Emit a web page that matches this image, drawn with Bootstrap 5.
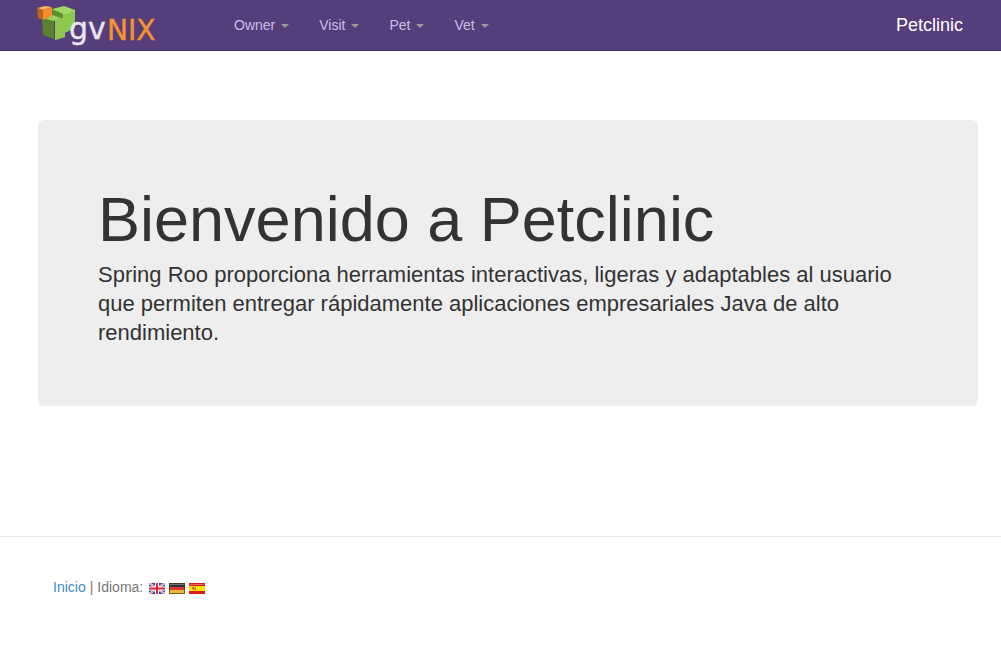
<!DOCTYPE html>
<html lang="es">
<head>
<meta charset="utf-8">
<meta name="viewport" content="width=device-width, initial-scale=1">
<title>Petclinic</title>
<link href="https://cdn.jsdelivr.net/npm/bootstrap@5.3.0/dist/css/bootstrap.min.css" rel="stylesheet">
<style>
  body { font-family: "Liberation Sans", Arial, sans-serif; font-size: 14px; line-height: 20px; color: #333; }
  .topbar { background: #563d7c; border-bottom: 1px solid #463265; padding: 0 23px 0 22px; }
  .topbar .navbar-brand { padding: 0; margin: 0; line-height: 20px; font-size: 18px; }
  .topbar .navbar-brand.site-name { padding: 15px; }
  .topbar .navbar-brand.logo { margin: 0 60px 0 15px; }
  .topbar .navbar-nav .nav-link { color: #cdbfe3; padding: 15px; line-height: 20px; display: flex; align-items: center; }
  .topbar .navbar-nav .nav-link:hover { color: #fff; }
  .topbar .dropdown-toggle::after { border-top: 4px solid #999; border-right: 4px solid transparent; border-left: 4px solid transparent; margin: 2px 0 0 6px; }
  .page-body { padding: 69px 23px 130px 38px; }
  .hero { background: #eee; border-radius: 6px; padding: 68px 60px 59px; }
  .hero h1 { font-size: 63px; line-height: 63px; font-weight: 400; margin-bottom: 9px; }
  .hero p { font-size: 22px; line-height: 29px; margin: 0; }
  .page-footer { border-top: 1px solid #e5e5e5; padding: 40px 53px; color: #777; }
  .page-footer a { color: #428bca; text-decoration: none; }
  .languages { padding-left: 2px; }
  .flag { display: block; margin-top: 2px; }
</style>
</head>
<body>
<nav class="navbar navbar-expand topbar align-items-start">
  <a class="navbar-brand logo" href="#" aria-label="gvNIX">
    <svg class="d-block" width="122" height="48" viewBox="0 0 122 48">
      <path d="M5 19 11 18 17 20V39L6 35Z" fill="#59812f"/>
      <path d="M11 13 16 15V21L6 18 11 17Z" fill="#699a37"/>
      <path d="M15 9 27 6 38 10V14L28 18 16 14Z" fill="#a1d765"/>
      <path d="M17 14 27 17 38 12V34L18 40V20L15 19Z" fill="#8bc84a"/>
      <path d="M15 9 26 14V19L15 16Z" fill="#608d32"/>
      <path d="M5 18 15 15 24 18 17 21Z" fill="#9bd05c"/>
      <path d="M26 15 38 11V34L18 40V21L26 18Z" fill="#8cc84b"/>
      <path d="M28 33 40 27V42H28Z" fill="#563d7c"/>
      <path d="M0 8 8 6 15 7 6 10Z" fill="#ffad60"/>
      <path d="M0 8 6 10V20L1 18Z" fill="#ba651b"/>
      <path d="M6 10 15 7V16L6 20Z" fill="#f58c2c"/>
      <text x="32" y="39" font-family="DejaVu Sans, sans-serif" font-size="30" fill="#e9e5f0" stroke="#e9e5f0" stroke-width=".4">gv</text>
      <text x="70" y="40" font-family="DejaVu Sans, sans-serif" font-size="28" fill="#f7932e" stroke="#f7932e" stroke-width=".4">NIX</text>
    </svg>
  </a>
  <ul class="navbar-nav me-auto">
    <li class="nav-item dropdown"><a class="nav-link dropdown-toggle" href="#" role="button" data-bs-toggle="dropdown">Owner</a></li>
    <li class="nav-item dropdown"><a class="nav-link dropdown-toggle" href="#" role="button" data-bs-toggle="dropdown">Visit</a></li>
    <li class="nav-item dropdown"><a class="nav-link dropdown-toggle" href="#" role="button" data-bs-toggle="dropdown">Pet</a></li>
    <li class="nav-item dropdown"><a class="nav-link dropdown-toggle" href="#" role="button" data-bs-toggle="dropdown">Vet</a></li>
  </ul>
  <a class="navbar-brand site-name text-white" href="#">Petclinic</a>
</nav>

<main class="page-body">
  <section class="hero">
    <h1>Bienvenido a Petclinic</h1>
    <p>Spring Roo proporciona herramientas interactivas, ligeras y adaptables al usuario que permiten entregar rápidamente aplicaciones empresariales Java de alto rendimiento.</p>
  </section>
</main>

<footer class="page-footer d-flex align-items-center gap-1">
  <a href="#">Inicio</a>
  <span>|</span>
  <span>Idioma:</span>
  <div class="languages d-flex gap-1">
    <a href="#" aria-label="English">
      <svg class="flag" width="16" height="11" viewBox="0 0 16 11">
        <path d="M0 0H16V11H0Z" fill="#3048a0"/>
        <path d="M0 0 16 11M16 0 0 11" stroke="#fff" stroke-width="2"/>
        <path d="M0 0 16 11M16 0 0 11" stroke="#e05260" stroke-width=".8"/>
        <path d="M8 0V11M0 5.500H16" stroke="#fff" stroke-width="4"/>
        <path d="M8 0V11M0 5.500H16" stroke="#dc2337" stroke-width="2"/>
      </svg>
    </a>
    <a href="#" aria-label="Deutsch">
      <svg class="flag" width="16" height="11" viewBox="0 0 16 11">
        <path d="M0 0H16V4H0Z" fill="#333"/><path d="M1 1H15V2H1Z" fill="#777"/>
        <path d="M0 4H16V7H0Z" fill="#d83a2f"/><path d="M0 7H16V11H0Z" fill="#e8b83c"/>
        <path d="M.5 .5H15.500V10.500H.5Z" fill="none" stroke="#4c3c1c" stroke-opacity=".75"/>
      </svg>
    </a>
    <a href="#" aria-label="Español">
      <svg class="flag" width="16" height="11" viewBox="0 0 16 11">
        <path d="M0 0H16V11H0Z" fill="#dc1c1c"/><path d="M1 1H15V2H1Z" fill="#ef6060"/>
        <path d="M0 3H16V8H0Z" fill="#ffe400"/><path d="M3 4H7V7H3Z" fill="#d99b50"/><path d="M4 4H5V6H4ZM6 6H7V7H6Z" fill="#b44436"/>
      </svg>
    </a>
  </div>
</footer>
<script src="https://cdn.jsdelivr.net/npm/bootstrap@5.3.0/dist/js/bootstrap.bundle.min.js"></script>
</body>
</html>
